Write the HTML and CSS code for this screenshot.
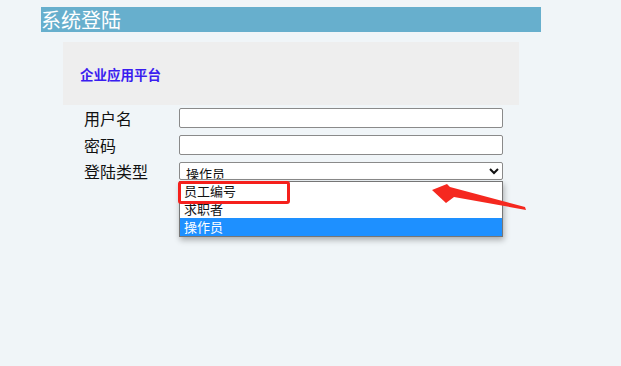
FILE: index.html
```html
<!DOCTYPE html>
<html lang="zh">
	<head>
		<meta charset="utf-8">
		<meta name="viewport" content="width=device-width, initial-scale=1.0">
		<title>系统登陆</title>
		<link rel="stylesheet" href="styles.css">
	</head>

	<body>
		<div class="page">
			<h1 class="title">系统登陆</h1>
			<div class="banner">企业应用平台</div>

			<form class="login">
				<label class="label" for="user">用户名</label>
				<input class="field" id="user" type="text">

				<label class="label" for="pwd">密码</label>
				<input class="field" id="pwd" type="password">

				<label class="label" for="kind">登陆类型</label>
				<select class="field select" id="kind">
					<option>员工编号</option>
					<option>求职者</option>
					<option selected>操作员</option>
				</select>
			</form>

			<!-- opened list of the select, drawn over the page -->
			<ul class="dropdown">
				<li>员工编号</li>
				<li>求职者</li>
				<li class="active">操作员</li>
			</ul>
			<span class="mark"></span>
		</div>

		<svg class="arrow" width="621" height="366" viewBox="0 0 621 366">
			<polygon points="432,190 447,184 450,187 525,207 526,210 454,197 446,203" fill="#f5281f"/>
		</svg>
	</body>
</html>
```

FILE: styles.css
```css
html, body{
	height: 100%;
}
body{
	margin: 0;
	background-color: #f0f5f8;
	font-family: "Noto Sans CJK SC", "Microsoft YaHei", sans-serif;
}
.page{
	position: relative;
	min-height: 100%;
	box-sizing: border-box;
	padding: 7px 0 0 41px;
}
.title{
	margin: 0;
	width: 500px;
	height: 25px;
	line-height: 25px;
	background-color: #67afcd;
	color: white;
	font-size: 20px;
	font-weight: normal;
}
.banner{
	margin: 10px 0 0 22px;
	width: 439px;
	height: 63px;
	padding-left: 17px;
	display: flex;
	align-items: center;
	background-color: #eeeeee;
	color: #3a1df0;
	font-size: 13.5px;
	font-weight: bold;
}
.login{
	margin: 3px 0 0 43px;
	display: grid;
	grid-template-columns: 95px 324px;
	grid-template-rows: 20px 20px 18px;
	row-gap: 7px;
	align-items: center;
}
.label{
	font-size: 16px;
	line-height: 20px;
	color: #111;
}
.field{
	box-sizing: border-box;
	width: 324px;
	height: 20px;
	margin: 0;
	border: 1px solid #8a8a8a;
	border-radius: 2px;
	background: white;
}
.select{
	height: 18px;
	padding: 0 0 0 2px;
	font-family: "Noto Sans CJK SC", sans-serif;
	font-size: 13px;
	line-height: 16px;
	color: #111;
}
.dropdown{
	position: absolute;
	top: 181px;
	left: 179px;
	box-sizing: border-box;
	width: 324px;
	margin: 0;
	padding: 0;
	list-style: none;
	background: white;
	border: 1px solid #767676;
	box-shadow: 1px 3px 6px rgba(0,0,0,.3);
	font-size: 13px;
	color: #111;
}
.dropdown li{
	height: 18px;
	line-height: 18px;
	padding-left: 4px;
}
.dropdown li.active{
	background-color: #1e90ff;
	color: white;
}
.mark{
	position: absolute;
	top: 181px;
	left: 178px;
	width: 106px;
	height: 17px;
	border: 3px solid #f5201c;
	border-radius: 3px;
}
.arrow{
	position: absolute;
	left: 0;
	top: 0;
}
```
